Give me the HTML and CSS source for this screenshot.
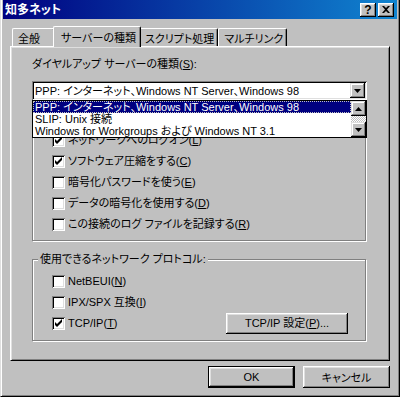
FILE: index.html
```html
<!DOCTYPE html>
<html lang="ja">
<head>
  <meta charset="UTF-8" />
  <title>知多ネット</title>
  <link rel="stylesheet" href="styles.css">
</head>
<body>
  <div class="window">
    <div class="titlebar">
      <span class="title">知多ネット</span>
      <button class="title-btn">?</button>
      <button class="title-btn close">
        <svg width="8" height="7" viewBox="0 0 8 7"><path d="M0 0h2l2 2 2-2h2L5 3.5 8 7H6L4 5 2 7H0l3-3.5z"/></svg>
      </button>
    </div>

    <div class="tabs">
      <div class="tab first">全般</div>
      <div class="tab active">サーバーの種類</div>
      <div class="tab">スクリプト処理</div>
      <div class="tab">マルチリンク</div>
    </div>

    <div class="panel">
      <div class="field-label">ダイヤルアップ サーバーの種類(<u>S</u>):</div>

      <div class="combo">
        <div class="combo-value">PPP: インターネット、Windows NT Server、Windows 98</div>
        <div class="arrow-btn combo-btn">
          <svg width="7" height="4" viewBox="0 0 7 4"><path d="M0 0h7L3.5 4z"/></svg>
        </div>

        <div class="dropdown">
          <div class="options">
            <div class="option selected">PPP: インターネット、Windows NT Server、Windows 98</div>
            <div class="option">SLIP: Unix 接続</div>
            <div class="option">Windows for Workgroups および Windows NT 3.1</div>
          </div>
          <div class="scrollbar">
            <div class="arrow-btn">
              <svg width="7" height="4" viewBox="0 0 7 4"><path d="M0 4h7L3.5 0z"/></svg>
            </div>
            <div class="track"></div>
            <div class="arrow-btn">
              <svg width="7" height="4" viewBox="0 0 7 4"><path d="M0 0h7L3.5 4z"/></svg>
            </div>
          </div>
        </div>
      </div>

      <div class="group advanced">
        <div class="rows">
          <div class="check-row">
            <span class="checkbox"><svg width="9" height="9" viewBox="0 0 9 9"><path d="M1 3v3l2 2 5-5V0L3 5z"/></svg></span>
            <span>ネットワークへのログオン(<u>L</u>)</span>
          </div>
          <div class="check-row">
            <span class="checkbox"><svg width="9" height="9" viewBox="0 0 9 9"><path d="M1 3v3l2 2 5-5V0L3 5z"/></svg></span>
            <span>ソフトウェア圧縮をする(<u>C</u>)</span>
          </div>
          <div class="check-row">
            <span class="checkbox"></span>
            <span>暗号化パスワードを使う(<u>E</u>)</span>
          </div>
          <div class="check-row">
            <span class="checkbox"></span>
            <span>データの暗号化を使用する(<u>D</u>)</span>
          </div>
          <div class="check-row">
            <span class="checkbox"></span>
            <span>この接続のログ ファイルを記録する(<u>R</u>)</span>
          </div>
        </div>
      </div>

      <div class="group protocols">
        <div class="group-title">使用できるネットワーク プロトコル:</div>
        <div class="rows">
          <div class="check-row">
            <span class="checkbox"></span>
            <span>NetBEUI(<u>N</u>)</span>
          </div>
          <div class="check-row">
            <span class="checkbox"></span>
            <span>IPX/SPX 互換(<u>I</u>)</span>
          </div>
          <div class="check-row">
            <span class="checkbox"><svg width="9" height="9" viewBox="0 0 9 9"><path d="M1 3v3l2 2 5-5V0L3 5z"/></svg></span>
            <span>TCP/IP(<u>T</u>)</span>
            <button class="btn settings">TCP/IP 設定(<u>P</u>)...</button>
          </div>
        </div>
      </div>
    </div>

    <div class="footer">
      <button class="btn default">OK</button>
      <button class="btn">キャンセル</button>
    </div>
  </div>
</body>
</html>
```

FILE: styles.css
```css
* {
  box-sizing: border-box;
}

body {
  margin: 0;
  background: #c0c0c0;
  font-family: "Liberation Sans", "Noto Sans CJK JP", sans-serif;
  font-size: 11px;
  font-feature-settings: "palt";
  color: #000;
}

button {
  font: inherit;
  color: #000;
  border: none;
  padding: 0;
  background: #c0c0c0;
}

.window {
  width: 400px;
  height: 397px;
  background: #c0c0c0;
  border: 1px solid;
  border-color: #dfdfdf #000 #000 #dfdfdf;
  border-top: 0;
  box-shadow: inset 1px 0 #fff, inset -1px -1px #808080;
  padding: 0 2px 2px;
}

/* title bar */
.titlebar {
  height: 19px;
  display: flex;
  align-items: center;
  padding: 0 3px 0 2px;
  background: linear-gradient(90deg, #000080, #1084d0);
  color: #fff;
}

.title {
  flex: 1;
  font-size: 12px;
  font-weight: bold;
  line-height: 14px;
}

.title-btn {
  width: 16px;
  height: 14px;
  display: flex;
  align-items: center;
  justify-content: center;
  font: bold 12px "Liberation Sans", sans-serif;
  box-shadow: inset -1px -1px #000, inset 1px 1px #fff, inset -2px -2px #808080, inset 2px 2px #dfdfdf;
}

.title-btn.close {
  margin-left: 2px;
}

/* tabs */
.tabs {
  display: flex;
  align-items: flex-end;
  height: 28px;
  margin: 0 7px -1px;
  padding-left: 2px;
  position: relative;
  z-index: 1;
}

.tab {
  height: 18px;
  margin-bottom: 1px;
  padding: 3px 3px 0 5px;
  line-height: 14px;
  white-space: nowrap;
  background: #c0c0c0;
  border-top: 1px solid #fff;
  border-left: 1px solid #fff;
  border-right: 1px solid #000;
  border-radius: 2px 2px 0 0;
  box-shadow: inset -1px 0 #808080;
}

.tab.first {
  min-width: 43px;
}

.tab.active {
  height: 21px;
  margin: 0 -2px;
  padding: 4px 4px 0 7px;
  position: relative;
  z-index: 1;
}

.tab.active + .tab {
  border-left-color: transparent;
}

/* tab page */
.panel {
  margin: 0 7px;
  padding: 10px 23px 19px 21px;
  border: 1px solid;
  border-color: #fff #000 #000 #fff;
  box-shadow: inset 1px 1px #dfdfdf, inset -1px -1px #808080;
}

.field-label {
  line-height: 14px;
  white-space: nowrap;
}

.combo {
  position: relative;
  height: 19px;
  margin: 10px -1px 11px 0;
  display: flex;
  align-items: center;
  padding: 2px;
  background: #fff;
  box-shadow: inset 1px 1px #808080, inset -1px -1px #fff, inset 2px 2px #000, inset -2px -2px #dfdfdf;
}

.combo-value {
  flex: 1;
  padding-left: 1px;
  line-height: 14px;
  white-space: nowrap;
}

.arrow-btn {
  width: 15px;
  height: 15px;
  display: flex;
  align-items: center;
  justify-content: center;
  background: #c0c0c0;
  box-shadow: inset -1px -1px #000, inset 1px 1px #dfdfdf, inset -2px -2px #808080, inset 2px 2px #fff;
}

.arrow-btn svg {
  display: block;
}

/* the open list lies over the group below */
.dropdown {
  position: absolute;
  top: 19px;
  left: 0;
  right: 0;
  height: 38px;
  display: flex;
  background: #fff;
  border: 1px solid #000;
  z-index: 2;
}

.options {
  flex: 1;
}

.option {
  height: 12px;
  line-height: 12px;
  padding-left: 2px;
  white-space: nowrap;
}

.option.selected {
  background: #000080;
  color: #fff;
  outline: 1px dotted #c0c0c0;
  outline-offset: -1px;
}

.scrollbar {
  width: 15px;
  display: flex;
  flex-direction: column;
}

.track {
  flex: 1;
  background: repeating-conic-gradient(#c0c0c0 0 25%, #fff 0 50%) 0 0 / 2px 2px;
}

/* group boxes */
.group {
  border: 1px solid #808080;
  box-shadow: inset 1px 1px #fff, 1px 1px #fff;
}

.group.advanced {
  padding: 18px 17px 5px 5px;
}

.group.protocols {
  margin-top: 18px;
  padding: 0 17px 6px 5px;
}

.group-title {
  width: fit-content;
  margin: -7px 0 5px;
  padding: 0 2px;
  line-height: 13px;
  background: #c0c0c0;
}

.rows {
  padding-left: 14px;
}

.check-row {
  height: 21px;
  display: flex;
  align-items: center;
  gap: 3px;
  line-height: 13px;
  white-space: nowrap;
}

.checkbox {
  width: 13px;
  height: 13px;
  flex: none;
  display: flex;
  align-items: center;
  justify-content: center;
  background: #fff;
  box-shadow: inset 1px 1px #808080, inset -1px -1px #fff, inset 2px 2px #000, inset -2px -2px #dfdfdf;
}

.checkbox svg {
  display: block;
}

/* push buttons */
.btn {
  height: 22px;
  box-shadow: inset -1px -1px #000, inset 1px 1px #fff, inset -2px -2px #808080, inset 2px 2px #dfdfdf;
}

.btn.settings {
  width: 122px;
  height: 21px;
  margin-left: auto;
}

.footer {
  display: flex;
  justify-content: flex-end;
  gap: 8px;
  margin: 5px 7px 0;
}

.footer .btn {
  width: 87px;
}

.btn.default {
  border: 1px solid #000;
}
```
